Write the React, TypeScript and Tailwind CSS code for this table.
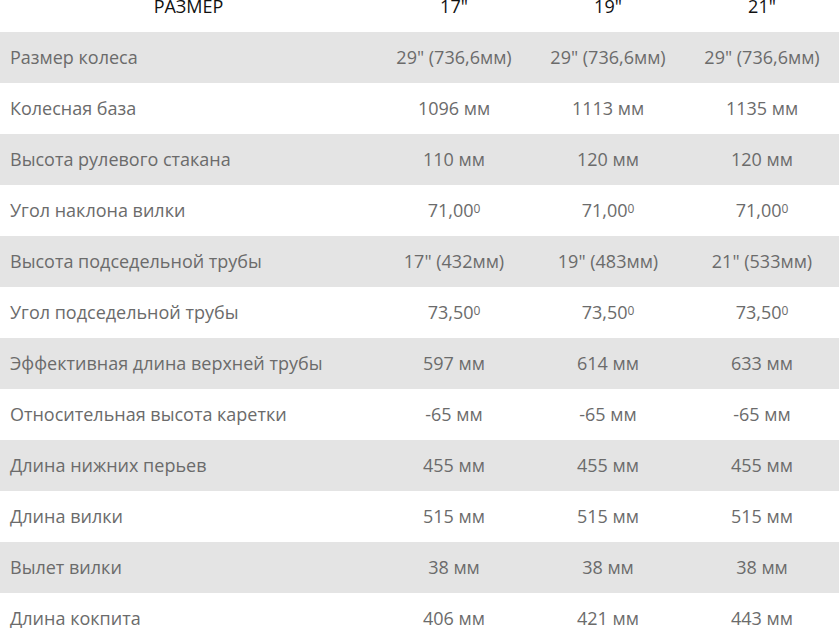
import React from "react";

type Cell = string | { v: string; deg: true };

const deg = (v: string): Cell => ({ v, deg: true });

const rows: [string, Cell, Cell, Cell][] = [
  ["Размер колеса", "29\" (736,6мм)", "29\" (736,6мм)", "29\" (736,6мм)"],
  ["Колесная база", "1096 мм", "1113 мм", "1135 мм"],
  ["Высота рулевого стакана", "110 мм", "120 мм", "120 мм"],
  ["Угол наклона вилки", deg("71,00"), deg("71,00"), deg("71,00")],
  ["Высота подседельной трубы", "17\" (432мм)", "19\" (483мм)", "21\" (533мм)"],
  ["Угол подседельной трубы", deg("73,50"), deg("73,50"), deg("73,50")],
  ["Эффективная длина верхней трубы", "597 мм", "614 мм", "633 мм"],
  ["Относительная высота каретки", "-65 мм", "-65 мм", "-65 мм"],
  ["Длина нижних перьев", "455 мм", "455 мм", "455 мм"],
  ["Длина вилки", "515 мм", "515 мм", "515 мм"],
  ["Вылет вилки", "38 мм", "38 мм", "38 мм"],
  ["Длина кокпита", "406 мм", "421 мм", "443 мм"],
];

function Value({ c }: { c: Cell }) {
  if (typeof c === "string") return <div className="text-center">{c}</div>;
  return (
    <div className="text-center">
      {c.v}
      <span className="text-[12px] leading-none align-[4px]">0</span>
    </div>
  );
}

export default function App() {
  return (
    <div
      className="w-[839px] h-[628px] overflow-hidden bg-white"
      style={{ fontFamily: '"Open Sans", "Noto Sans", sans-serif' }}
    >
      <div className="grid grid-cols-[377px_154px_154px_154px] h-[51px] -mt-[19px] items-center text-[18px] text-[#111]">
        <div className="text-center">РАЗМЕР</div>
        <div className="text-center">17"</div>
        <div className="text-center">19"</div>
        <div className="text-center">21"</div>
      </div>
      {rows.map((r, i) => (
        <div
          key={i}
          className={
            "grid grid-cols-[377px_154px_154px_154px] h-[51px] items-center text-[18px] text-[#6b6b6b] " +
            (i % 2 === 0 ? "bg-[#e4e4e4]" : "bg-white")
          }
        >
          <div className="pl-[10px]">{r[0]}</div>
          <Value c={r[1]} />
          <Value c={r[2]} />
          <Value c={r[3]} />
        </div>
      ))}
    </div>
  );
}
